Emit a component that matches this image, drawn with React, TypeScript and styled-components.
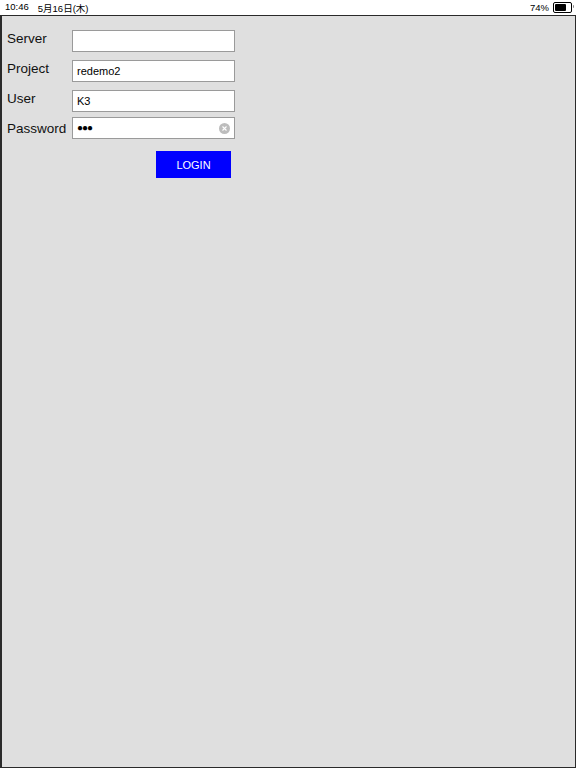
import React from "react";
import styled, { createGlobalStyle } from "styled-components";

const GlobalStyle = createGlobalStyle`
    html, body {
        margin: 0;
        padding: 0;
        background: #ffffff;
        font-family: "Liberation Sans", Arial, "Noto Sans CJK JP", sans-serif;
    }
`

const StatusBar = styled.div`
    height: 15px;
    display: flex;
    align-items: center;
    justify-content: space-between;
    padding: 0 4px 0 5px;
    font-size: 9.5px;
    color: #000;
    background: #fff;
`
const StatusLeft = styled.div`
    display: flex;
    gap: 9px;
`
const StatusRight = styled.div`
    display: flex;
    align-items: center;
    gap: 4px;
`
const Battery = styled.div`
    position: relative;
    width: 15px;
    height: 7px;
    border: 1px solid #000;
    border-radius: 2px;
    padding: 1px;
    &::after {
        content: "";
        position: absolute;
        right: -3px;
        top: 2px;
        width: 1px;
        height: 3px;
        background: #888;
        border-radius: 0 1px 1px 0;
    }
`
const BatteryLevel = styled.div`
    height: 100%;
    background: #000;
    border-radius: 1px;
`

const Screen = styled.div`
    box-sizing: border-box;
    height: 753px;
    border: 1px solid #2a2a2a;
    border-left-width: 2px;
    background: #dfdfdf;
    padding: 14px 0 0 5px;
`
const Form = styled.div`
    display: flex;
    flex-direction: column;
    width: 230px;
`
const Row = styled.div<{ gapTop: number }>`
    display: flex;
    align-items: flex-start;
    margin-top: ${props => props.gapTop}px;
`
// labels keep a 30px pitch even where the field sits a little higher
const Label = styled.label<{ shift?: number }>`
    width: 65px;
    padding-top: ${props => props.shift || 0}px;
    font-size: 13.5px;
    line-height: 17px;
    color: #111;
`
const Field = styled.div`
    position: relative;
    box-sizing: border-box;
    width: 163px;
    height: 22px;
    border: 1px solid #9a9a9a;
    background: #fff;
    display: flex;
    align-items: center;
    padding-left: 4px;
    font-size: 11px;
    color: #000;
`
const Dots = styled.span`
    font-size: 10px;
    letter-spacing: -1px;
    line-height: 1;
`
const ClearButton = styled.div`
    position: absolute;
    right: 4px;
    top: 5px;
    width: 11px;
    height: 11px;
    border-radius: 50%;
    background: #bdbdbd;
    display: flex;
    align-items: center;
    justify-content: center;
`
const LoginButton = styled.button`
    align-self: flex-end;
    margin: 12px 6px 0 0;
    width: 75px;
    height: 27px;
    border: none;
    background: #0000ff;
    color: #fff;
    font-family: inherit;
    font-size: 11px;
    cursor: pointer;
`

function ClearIcon() {
    return (
        <svg width="5" height="5" viewBox="0 0 5 5">
            <path d="M0.5 0.5 L4.5 4.5 M4.5 0.5 L0.5 4.5" stroke="#fff" strokeWidth="1.1" />
        </svg>
    )
}

export default function App() {
    return (
        <>
            <GlobalStyle />
            <StatusBar>
                <StatusLeft>
                    <span>10:46</span>
                    <span>5月16日(木)</span>
                </StatusLeft>
                <StatusRight>
                    <span>74%</span>
                    <Battery>
                        <BatteryLevel style={{ width: "74%" }} />
                    </Battery>
                </StatusRight>
            </StatusBar>
            <Screen>
                <Form>
                    <Row gapTop={0}>
                        <Label>Server</Label>
                        <Field />
                    </Row>
                    <Row gapTop={8}>
                        <Label>Project</Label>
                        <Field>redemo2</Field>
                    </Row>
                    <Row gapTop={8}>
                        <Label>User</Label>
                        <Field>K3</Field>
                    </Row>
                    <Row gapTop={5}>
                        <Label shift={3}>Password</Label>
                        <Field>
                            <Dots>●●●</Dots>
                            <ClearButton><ClearIcon /></ClearButton>
                        </Field>
                    </Row>
                    <LoginButton>LOGIN</LoginButton>
                </Form>
            </Screen>
        </>
    )
}
